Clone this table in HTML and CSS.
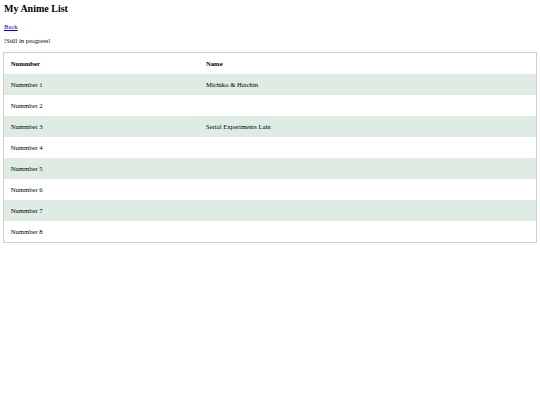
FILE: index.html
```html
<!DOCTYPE html>
<html lang="en">
<head>
  <meta charset="UTF-8">
  <meta name="viewport" content="width=device-width, initial-scale=1.0">
  <title>My Anime List</title>
  <link rel="stylesheet" href="styles.css">
</head>
<body>
  <section class="page">
    <h1>My Anime List</h1>
    <a href="#" class="back">Back</a>
    <p class="note">!Still in progress!</p>

    <table class="list">
      <thead>
        <tr>
          <th class="col-num">Nummber</th>
          <th>Name</th>
        </tr>
      </thead>
      <tbody>
        <tr><td>Nummber 1</td><td>Michiko &amp; Hatchin</td></tr>
        <tr><td>Nummber 2</td><td></td></tr>
        <tr><td>Nummber 3</td><td>Serial Experiments Lain</td></tr>
        <tr><td>Nummber 4</td><td></td></tr>
        <tr><td>Nummber 5</td><td></td></tr>
        <tr><td>Nummber 6</td><td></td></tr>
        <tr><td>Nummber 7</td><td></td></tr>
        <tr><td>Nummber 8</td><td></td></tr>
      </tbody>
    </table>
  </section>
</body>
</html>
```

FILE: styles.css
```css
body {
  margin: 0;
  padding: 3px 3px 0 3px;
  font-family: "Liberation Serif", "Times New Roman", serif;
  font-size: 6.67px;
  color: #000;
  background: #fff;
}

h1 {
  font-size: 10px;
  margin: 0 0 8.5px 1px;
}

.back {
  display: block;
  margin-left: 1px;
  color: #0000ee;
}

.note {
  margin: 7.5px 0 8px 1px;
}

.list {
  width: 100%;
  border-collapse: collapse;
  border: 1px solid #cfcfcf;
}

.list th,
.list td {
  text-align: left;
  padding: 6.67px 6.67px;
  height: 7.67px;
}

.list th {
  font-weight: bold;
}

.col-num {
  width: 182px;
}

.list tbody tr:nth-child(odd) {
  background-color: #dfece3;
}
```
